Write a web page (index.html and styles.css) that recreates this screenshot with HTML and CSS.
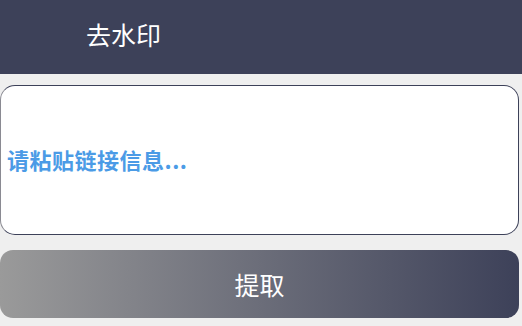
FILE: index.html
```html
<!DOCTYPE html>
<html lang="zh">
<head>
<meta charset="utf-8">
<link rel="stylesheet" href="styles.css">
</head>
<body>
<header class="topbar"><span class="title">去水印</span></header>
<main class="content">
  <div class="input-box"><span class="placeholder">请粘贴链接信息...</span></div>
  <button class="extract-btn">提取</button>
</main>
</body>
</html>
```
FILE: styles.css
```css
html, body {
  margin: 0;
  padding: 0;
}
body {
  width: 522px;
  height: 326px;
  background: #efefef;
  font-family: "Noto Sans CJK SC", "Noto Sans", sans-serif;
  overflow: hidden;
}
.topbar {
  height: 74px;
  background: #3d4159;
  display: flex;
  align-items: center;
  padding-left: 86px;
  box-sizing: border-box;
}
.title {
  color: #ffffff;
  font-size: 25px;
  line-height: 1;
  margin-top: -6px;
}
.content {
  display: flex;
  flex-direction: column;
  padding: 11px 3px 0 0;
  gap: 15px;
}
.input-box {
  height: 150px;
  box-sizing: border-box;
  background: #ffffff;
  border: 1px solid #3d4159;
  border-left-color: #8a8a92;
  border-radius: 15px;
  display: flex;
  align-items: center;
  padding-left: 6px;
}
.placeholder {
  color: #4b9be6;
  font-size: 22px;
  font-weight: bold;
  letter-spacing: 0.5px;
  margin-top: -2px;
}
.extract-btn {
  height: 68px;
  border: none;
  border-radius: 13px;
  background: linear-gradient(to right, #9a9a9a, #3d4159);
  color: #ffffff;
  font-family: "Noto Sans CJK SC", "Noto Sans", sans-serif;
  font-size: 25px;
  padding: 0;
  margin: 0;
}
```
